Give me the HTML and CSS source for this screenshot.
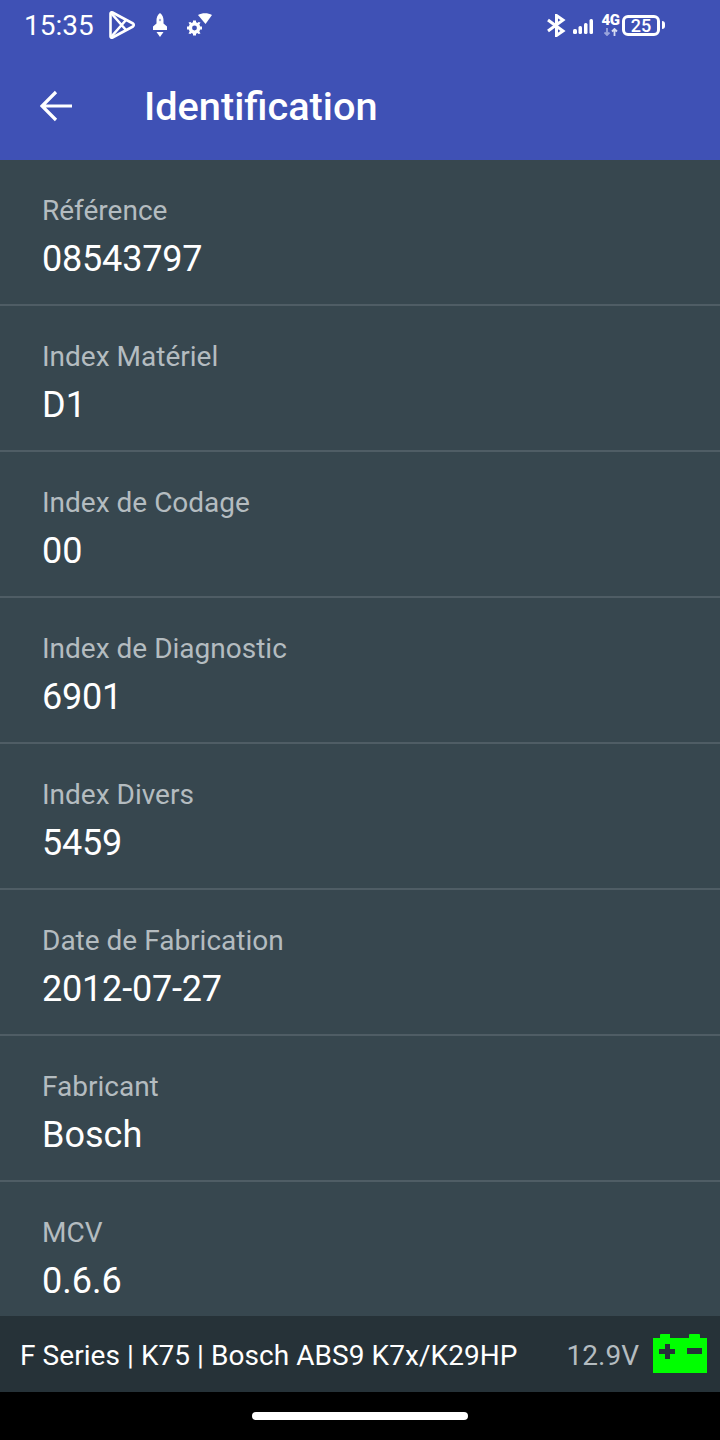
FILE: index.html
```html
<!DOCTYPE html>
<html>
<head>
  <title>Identification</title>
  <link rel="stylesheet" href="styles.css">
</head>
<body>
  <div class="screen">
    <header class="appbar">
      <div class="statusbar">
        <span class="time">15:35</span>
        <svg class="ic-play" width="26" height="28" viewBox="0 0 26 28" fill="none" stroke="#fff" stroke-width="2.600" stroke-linejoin="round">
          <path d="M1.500 2.500 C1.500 1.500 2.500 1 3.500 1.500 L24 12.500 C25 13.200 25 14.800 24 15.500 L3.500 26.500 C2.500 27 1.500 26.500 1.500 25.500 Z"/>
          <path d="M2 2 L17 19 M2 26 L17 9"/>
        </svg>
        <svg class="ic-rocket" width="14" height="24" viewBox="0 0 14 24" fill="#fff">
          <path d="M7 0 C9.500 2 10.500 4.500 10.500 7 L10.500 10.500 L14 13.500 L14 17 L0 17 L0 13.500 L3.500 10.500 L3.500 7 C3.500 4.500 4.500 2 7 0 Z"/>
          <path d="M3.500 19 L10.500 19 L7 24 Z"/>
          <circle cx="7" cy="7" r="1.200" fill="#9fa8da"/>
        </svg>
        <svg class="ic-wifi" width="26" height="25" viewBox="0 0 26 25" fill="#fff">
          <path d="M11 2 C15 -0.500 21 -0.500 25 2 L18.500 11 Z"/>
          <circle cx="7.500" cy="15" r="4.200" fill="none" stroke="#fff" stroke-width="3.500"/>
          <path d="M6 7.500 h3 v3 h-3 z M6 19.500 h3 v3 h-3 z M0 13.500 h3 v3 h-3 z M12 13.500 h3 v3 h-3 z M1.500 9.500 l2 -0.500 l2 2 l-2 2 z M13.500 9.500 l-2 -0.500 l-2 2 l2 2 z M1.500 20.500 l2 0.500 l2 -2 l-2 -2 z M13.500 20.500 l-2 0.500 l-2 -2 l2 -2 z"/>
        </svg>
        <span class="status-right">
          <svg class="ic-bt" width="21" height="23" viewBox="0 0 21 23" fill="none" stroke="#fff" stroke-width="3">
            <path d="M2 6 L17 17 L10.500 21.500 L10.500 1.500 L17 6 L2 17"/>
          </svg>
          <svg class="ic-signal" width="21" height="18" viewBox="0 0 21 18" fill="#fff">
            <rect x="0" y="12" width="4" height="5" rx="1.500"/>
            <rect x="5.500" y="9" width="3.500" height="8" rx="1.500"/>
            <rect x="11" y="6" width="3.500" height="11" rx="1.500"/>
            <rect x="16.500" y="2" width="3.500" height="15" rx="1.500"/>
          </svg>
          <span class="net">
            <span class="net-type">4G</span>
            <svg width="14" height="8" viewBox="0 0 14 8" fill="none" stroke="#9aa5dc" stroke-width="1.800">
              <path d="M3 0 V7 M0.500 4.500 L3 7 L5.500 4.500"/>
              <path d="M10.500 8 V1 M8 3.500 L10.500 1 L13 3.500" stroke="#d5daf0"/>
            </svg>
          </span>
          <span class="batt"><span class="batt-num">25</span></span>
          <span class="batt-tip"></span>
        </span>
      </div>
      <div class="toolbar">
        <svg class="ic-back" width="32" height="32" viewBox="0 0 32 32" fill="none" stroke="#fff" stroke-width="3.200">
          <path d="M32 16 H2 M16 2 L2 16 L16 30"/>
        </svg>
        <h1 class="title">Identification</h1>
      </div>
    </header>

    <main class="list">
      <div class="row">
        <div class="label">Référence</div>
        <div class="value num">08543797</div>
      </div>
      <div class="row">
        <div class="label">Index Matériel</div>
        <div class="value">D1</div>
      </div>
      <div class="row">
        <div class="label">Index de Codage</div>
        <div class="value">00</div>
      </div>
      <div class="row">
        <div class="label">Index de Diagnostic</div>
        <div class="value num">6901</div>
      </div>
      <div class="row">
        <div class="label">Index Divers</div>
        <div class="value num">5459</div>
      </div>
      <div class="row">
        <div class="label">Date de Fabrication</div>
        <div class="value num">2012-07-27</div>
      </div>
      <div class="row">
        <div class="label">Fabricant</div>
        <div class="value">Bosch</div>
      </div>
      <div class="row">
        <div class="label">MCV</div>
        <div class="value">0.6.6</div>
      </div>
    </main>

    <footer class="footer">
      <span class="ecu">F Series | K75 | Bosch ABS9 K7x/K29HP</span>
      <span class="volt">12.9V</span>
      <svg class="ic-battery" width="54" height="40" viewBox="0 0 54 40">
        <path fill="#00ff00" d="M7 1 Q7 0 8 0 H17 V4 H36 V1 Q36 0 37 0 H46 Q47 0 47 1 V4 H54 V39 H0 V4 H7 Z"/>
        <path fill="#263238" d="M6 15 H12 V10 H17 V15 H22 V20 H17 V25 H12 V20 H6 Z M34 14 H49 V20 H34 Z"/>
      </svg>
    </footer>

    <div class="navbar">
      <div class="pill"></div>
    </div>
  </div>
</body>
</html>
```

FILE: styles.css
```css
html, body {
  margin: 0;
  height: 100%;
  background: #37474f;
  font-family: Roboto, sans-serif;
}
.screen {
  display: flex;
  flex-direction: column;
  height: 1440px;
  overflow: hidden;
}
.appbar {
  background: #3f51b5;
  color: #fff;
  height: 160px;
  flex: none;
}
.statusbar {
  display: flex;
  align-items: center;
  height: 50px;
  padding: 0 24px;
}
.time {
  font-size: 28px;
  margin-right: 15px;
}
.ic-rocket {
  margin-left: 18px;
}
.ic-wifi {
  margin-left: 20px;
}
.status-right {
  display: flex;
  align-items: center;
  margin-left: auto;
  margin-right: 31px;
}
.ic-signal {
  margin-left: 6px;
  margin-top: 2px;
}
.net {
  display: flex;
  flex-direction: column;
  align-items: center;
  gap: 2px;
  width: 15px;
  margin-left: 9px;
}
.net-type {
  font-size: 15px;
  font-weight: 900;
  line-height: 12px;
  letter-spacing: -0.500px;
  white-space: nowrap;
}
.batt {
  box-sizing: border-box;
  width: 38px;
  height: 21px;
  border: 3px solid #fff;
  border-radius: 6px;
  display: flex;
  align-items: center;
  justify-content: center;
  margin-left: 4px;
}
.batt-num {
  font-size: 18px;
  font-weight: 500;
}
.batt-tip {
  width: 3px;
  height: 8px;
  background: #fff;
  border-radius: 0 3px 3px 0;
  margin-left: 2px;
}
.toolbar {
  display: flex;
  align-items: center;
  height: 112px;
  padding-left: 40px;
}
.ic-back {
  flex: none;
}
.title {
  margin: 0 0 0 72px;
  font-size: 39.700px;
  font-weight: 500;
}
.list {
  flex: 1;
  min-height: 0;
  overflow: hidden;
}
.row {
  box-sizing: border-box;
  height: 146px;
  padding: 33px 42px 0;
  border-bottom: 2px solid #4f5d65;
}
.label {
  color: #b4bcc0;
  font-size: 28px;
  line-height: 36px;
}
.value {
  color: #fff;
  font-size: 36px;
  line-height: 60px;
}
.num {
  letter-spacing: -0.200px;
}
.footer {
  flex: none;
  display: flex;
  align-items: center;
  height: 76px;
  background: #263238;
  padding: 2px 13px 0 20px;
  box-sizing: border-box;
}
.ecu {
  color: #fff;
  font-size: 28px;
  letter-spacing: 0.060px;
  flex: 1;
}
.volt {
  color: #b4bcc0;
  font-size: 28px;
  margin-right: 14px;
}
.ic-battery {
  margin-top: -2px;
}
.navbar {
  flex: none;
  height: 48px;
  background: #000;
  display: flex;
  justify-content: center;
  padding-top: 20px;
  box-sizing: border-box;
}
.pill {
  width: 216px;
  height: 8px;
  border-radius: 4px;
  background: #fff;
}
```
